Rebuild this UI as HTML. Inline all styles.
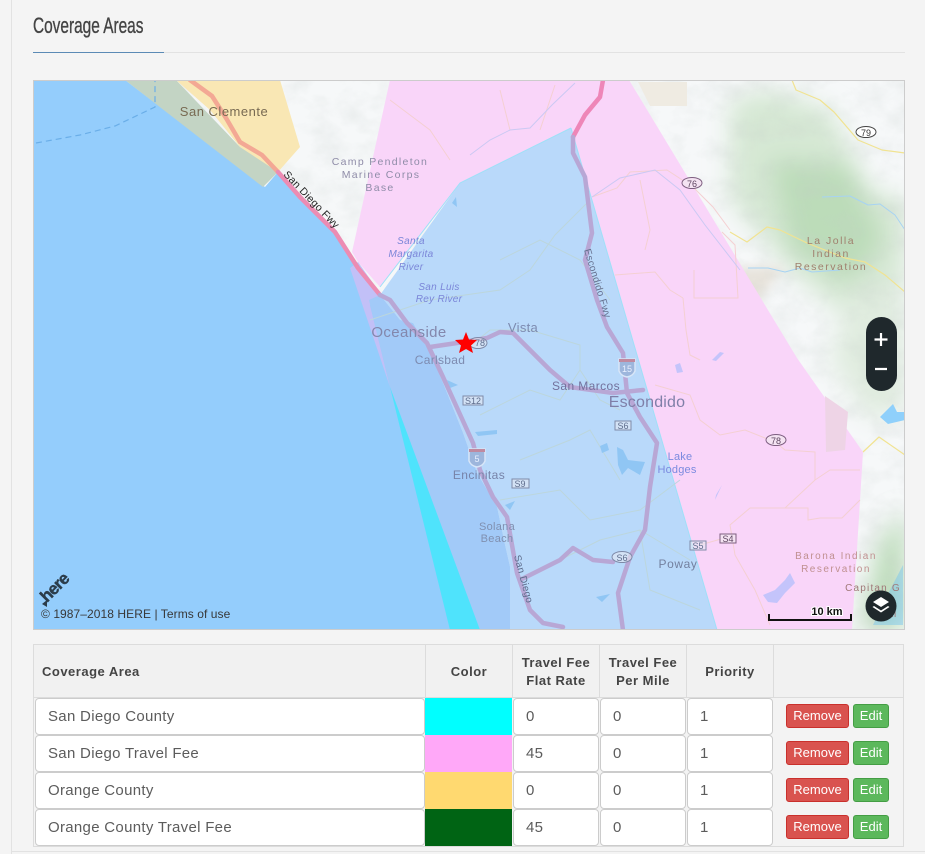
<!DOCTYPE html>
<html><head><meta charset="utf-8"><style>
html,body{margin:0;padding:0;width:925px;height:854px;overflow:hidden;background:#f4f4f4}
body{position:relative;font-family:"Liberation Sans",sans-serif;color:#555}
.a{position:absolute;box-sizing:border-box}
.h{background:#f1f1f1;border-right:1px solid #dcdcdc;font-weight:bold;font-size:13px;line-height:18px;color:#444;text-align:center;letter-spacing:.5px;display:flex;align-items:center;justify-content:center}
.i{background:#fff;border:1px solid #ccc;border-radius:4px;font-size:15px;line-height:36px;color:#5c5c5c;padding-left:12px;letter-spacing:.3px}
.b{height:24px;border-radius:3px;color:#fff;font-size:13px;line-height:22px;text-align:center;border:1px solid}
.r{background:#d9534f;border-color:#c9302c;left:786px;width:63px}
.e{background:#5cb85c;border-color:#449d44;left:853px;width:36px}
svg text{font-family:"Liberation Sans",sans-serif}
</style></head><body>
<div class="a" style="left:11px;top:0;width:1px;height:854px;background:#e2e2e2"></div>
<div class="a" style="left:12px;top:851px;width:913px;height:1px;background:#e2e2e2"></div>
<div class="a" id="t" style="left:33px;top:12px;font-size:22px;line-height:28px;color:#444;-webkit-text-stroke:.35px #444;transform:scaleX(.7);transform-origin:0 0;white-space:nowrap">Coverage Areas</div>
<div class="a" style="left:33px;top:52px;width:872px;height:1px;background:#e2e2e2"></div>
<div class="a" style="left:33px;top:52px;width:131px;height:1px;background:#5b8ab5"></div>

<svg class="a" style="left:33px;top:80px" width="872" height="550" viewBox="33 80 872 550">
<defs>
<filter id="bl" x="-20%" y="-20%" width="140%" height="140%"><feGaussianBlur stdDeviation="12"/></filter>
<filter id="bs" x="-20%" y="-20%" width="140%" height="140%"><feGaussianBlur stdDeviation="5"/></filter>
<filter id="nz" x="0" y="0" width="100%" height="100%"><feTurbulence type="fractalNoise" baseFrequency=".035 .05" numOctaves="4" seed="4"/><feColorMatrix values="0 0 0 0 .55  0 0 0 0 .6  0 0 0 0 .58  1.6 0 0 0 -.62"/></filter>
</defs>
<rect x="33" y="80" width="872" height="550" fill="#f6f8f9"/>
<!-- terrain -->
<g filter="url(#bl)">
<path d="M730 100L770 90L830 110L870 190L905 200V300L860 330L790 270L730 200Z" fill="#d6e8d4"/>
<path d="M770 160L850 165L885 240L850 285L790 250Z" fill="#bcdcb9"/>
<path d="M850 290L905 280V410L870 420L830 360Z" fill="#e0ecdf"/>
<path d="M880 540L905 510V630H860Z" fill="#bcdcb9"/>
</g>
<g filter="url(#bs)">
<path d="M715 270L785 265L760 300L725 305Z" fill="#e7e3db"/>
</g>
<rect x="33" y="80" width="872" height="550" filter="url(#nz)" opacity=".28"/>
<path d="M638 82H687V106H650Z" fill="#efebe2"/>
<!-- right side roads & rivers -->
<g fill="none" stroke-linejoin="round">
<path d="M792 80L796 90L820 100L834 112L858 140L882 150L905 153" stroke="#f1e391" stroke-width="1.2"/>
<path d="M730 232L747 242L767 227L780 230L807 243L845 258L865 262L885 275L905 292" stroke="#f1e391" stroke-width="1.2"/>
<path d="M822 197L850 196L868 205L880 204L895 215L905 230" stroke="#a7d3f3" stroke-width="1"/>
<path d="M748 268L768 268L785 272L800 268L812 272L840 270" stroke="#a7d3f3" stroke-width="1"/>
<path d="M863 452L879 437L905 455" stroke="#f1e391" stroke-width="1.2"/>
</g>
<path d="M880 417L893 404L897 412L905 412V420L888 424Z" fill="#8fd0fb"/>
<path d="M873 625L890 590L903 565V625Z" fill="#70c3f0" opacity=".45"/>
<!-- water -->
<path d="M33 80H125L265 187L278 172L300 197L335 235L358 268L380 295L400 320L413 323L430 353L443 383L463 433L477 473L497 507L505 545L510 567L510 630H33Z" fill="#94cdfc"/>
<!-- Orange polygons -->
<path d="M176 80H280L300 147L278 172L262 162L240 147L210 110Z" fill="#f9e7b4"/>
<path d="M125 80H176L240 147L278 172L263 187Z" fill="#c3d4c4"/>
<path d="M36 143L80 135L115 126L155 107V80" fill="none" stroke="#6aaee8" stroke-width="1.2" stroke-dasharray="6 4"/>
<!-- Pink -->
<path d="M390 80H629L797 358L863 452L852 630H717L571 128L460 183L380 287L358 262L352 252Z" fill="#f9d5f9"/>
<path d="M825 396L848 412L845 450L826 452Z" fill="#eed4e6"/>
<path d="M350 268L358 262L385 300L370 305L390 387Z" fill="#c2c0f7"/>
<!-- Blue -->
<path d="M571 128L717 630H510V567L505 545L497 507L477 473L463 433L443 383L430 353L413 323L400 320L380 295L460 183Z" fill="#b9d9fa"/>
<path d="M380 295L400 320L413 323L430 353L443 383L463 433L477 473L497 507L505 545L510 567V630H480L390 387L369 300Z" fill="#a2caf8"/>
<path d="M390 387L480 630H450Z" fill="#4fe3fc"/>
<path d="M571 128L717 630" fill="none" stroke="#9fe0f8" stroke-width="1"/>
<path d="M571 128L460 183L380 287" fill="none" stroke="#9fe0f8" stroke-width="1"/>
<!-- pink area minor roads -->
<g fill="none" stroke="#f4d0d2" stroke-width="1">
<path d="M592 197L617 188L630 172L667 170L693 187L713 207L730 230"/>
<path d="M640 180L650 230L645 250"/>
<path d="M694 270V298H738L735 245L722 232"/>
<path d="M683 298L686 330L690 355L700 360"/>
<path d="M615 275L655 272L670 290L683 298"/>
<path d="M655 385L690 395L700 420L720 435L745 430L775 442L785 450L815 452L815 480L830 470L860 470"/>
<path d="M815 480L785 508L750 508L730 525L735 555L755 590L770 625"/>
<path d="M785 508H808V520L820 518L842 518L860 500"/>
<path d="M700 545L735 535"/>
<path d="M390 100L430 130L450 160M500 90L510 130M555 85L540 130"/>
</g>
<g fill="none" stroke="#cbc9f3" stroke-width="1">
<path d="M575 83L552 105L530 128L510 130L490 140L470 155"/>
<path d="M592 197L620 178L655 170L680 190L705 225L740 270"/>
</g>
<g fill="none" stroke="#bcd6dc" stroke-width="1">
<path d="M370 320L430 300L500 290L530 270L555 235L590 200"/>
<path d="M480 415L530 390L560 400L580 370L600 400L620 410M580 370L580 345L530 330"/>
<path d="M520 460L570 440L590 430L620 480M500 500L560 490L590 520L640 510L680 480"/>
<path d="M560 560L600 540L640 530L690 560M640 530L650 590L700 610"/>
<path d="M610 300L580 260L540 240L500 260"/>
<path d="M465 350L490 330L530 330"/>
</g>
<g fill="#90c6f4">
<path d="M600 446L607 443L609 450L602 453Z"/>
<path d="M617 447L623 450L628 460L645 462L640 475L628 468L622 475L618 465Z"/>
<path d="M475 432L497 430V434L478 436Z"/>
<path d="M505 505L515 501L510 510Z"/>
<path d="M596 597L610 594L602 602Z"/>
<path d="M447 380L458 385L450 388Z"/>
<path d="M452 203L456 197L457 207Z"/>
</g>
<g fill="#c4c4fb">
<path d="M712 360L720 352L724 353L716 361Z"/>
<path d="M675 365L680 363L683 372L677 373Z"/>
<path d="M715 500L722 485L716 495Z" />
<path d="M763 595L775 590L785 580L790 573L795 583L785 593L777 603L768 602Z"/>
</g>
<!-- highways -->
<g fill="none" stroke-linecap="round" stroke-linejoin="round">
<path d="M190 80L212 96L226 118L240 142L262 155L278 172" stroke="#f3a894" stroke-width="4.5"/>
<path d="M278 172L300 197L335 232L358 268L380 295" stroke="#ec8cb3" stroke-width="4.500"/>
<path d="M603 80L600 97L585 115L573 137" stroke="#ee86b8" stroke-width="4.500"/>
<g stroke="#b8a7d5" stroke-width="4.500">
<path d="M380 295L390 300L407 323L427 343L443 377L473 443L480 470L493 497L507 517L517 573L530 610L543 623L563 627"/>
<path d="M573 137V153L585 177L592 233L585 260L597 300L607 327L623 353L627 393L640 417L657 443L650 487L645 530L630 557L618 593L623 630"/>
<path d="M430 347L457 343L487 338L500 332L513 333L530 350L550 370L570 387L613 393L643 390"/>
<path d="M520 580L560 560L573 548L593 560L613 562"/>
</g>
</g>
<!-- shields -->
<g font-size="10" text-anchor="middle">
<g fill="#e5e8f2" fill-opacity=".6" stroke="#7f8aa8" stroke-width="1">
<ellipse cx="478" cy="343" rx="9" ry="5.5"/>
<rect x="463" y="396" width="20" height="9"/>
<rect x="512" y="479" width="17" height="9"/>
<rect x="615" y="421" width="16" height="9"/>
<rect x="690" y="541" width="16" height="9"/>
<ellipse cx="622" cy="557" rx="10" ry="5.5"/>
</g>
<g fill="#f4e3f2" stroke="#7d5e80" stroke-width="1">
<ellipse cx="692" cy="183" rx="10" ry="5.5"/>
<ellipse cx="776" cy="440" rx="10" ry="5.5"/>
<rect x="720" y="534" width="16" height="9"/>
</g>
<ellipse cx="866" cy="132" rx="10" ry="5.5" fill="#fff" stroke="#444"/>
<path d="M469 449H485V461Q483 466 477 467Q471 466 469 461Z" fill="#9db6dc" stroke="#d8e6f8" stroke-width="1.500"/>
<path d="M469 449H485V452H469Z" fill="#c08aa0"/>
<path d="M619 359H635V371Q633 376 627 377Q621 376 619 371Z" fill="#9db6dc" stroke="#d8e6f8" stroke-width="1.500"/>
<path d="M619 359H635V362H619Z" fill="#c08aa0"/>
<g fill="#5f6d8c" font-size="9">
<text x="480" y="346">78</text><text x="473" y="404">S12</text><text x="520" y="487" >S9</text><text x="623" y="429">S6</text><text x="698" y="549">S5</text><text x="622" y="561">S6</text>
</g>
<g fill="#5d4560" font-size="9"><text x="692" y="187">76</text><text x="776" y="444">78</text><text x="728" y="542">S4</text></g>
<text x="866" y="136" fill="#333" font-size="9">79</text>
<text x="477" y="462" fill="#e8f0ff" font-size="9">5</text><text x="627" y="372" fill="#e8f0ff" font-size="9">15</text>
</g>
<!-- labels -->
<g text-anchor="middle">
<text x="224" y="116" font-size="13" fill="#786a52" letter-spacing=".5">San Clemente</text>
<g font-size="10.500" fill="#8f8ca8" letter-spacing="1.300"><text x="380" y="165">Camp Pendleton</text><text x="381" y="178">Marine Corps</text><text x="380" y="191">Base</text></g>
<g font-size="10" fill="#7b86d8" font-style="italic" letter-spacing=".3"><text x="411" y="244">Santa</text><text x="411" y="257">Margarita</text><text x="411" y="270">River</text><text x="439" y="290">San Luis</text><text x="439" y="302">Rey River</text></g>
<text x="409" y="337" font-size="15" fill="#8387ac" letter-spacing=".4">Oceanside</text>
<text x="523" y="332" font-size="13" fill="#7d8bb0" letter-spacing=".3">Vista</text>
<text x="440" y="364" font-size="12" fill="#7d8bb0" letter-spacing=".3">Carlsbad</text>
<text x="586" y="390" font-size="12" fill="#73719c" letter-spacing=".4">San Marcos</text>
<text x="647" y="407" font-size="16" fill="#7f7fa8" letter-spacing=".2">Escondido</text>
<text x="479" y="479" font-size="12" fill="#7783a8" letter-spacing=".4">Encinitas</text>
<g font-size="11" fill="#8090b0" letter-spacing=".3"><text x="497" y="530">Solana</text><text x="497" y="542">Beach</text></g>
<g font-size="11" fill="#7b8adf" letter-spacing=".2"><text x="680" y="460">Lake</text><text x="677" y="473">Hodges</text></g>
<text x="678" y="568" font-size="12" fill="#73809f" letter-spacing=".6">Poway</text>
<g font-size="10.500" fill="#a0806e" letter-spacing="1.500"><text x="831" y="244">La Jolla</text><text x="831" y="257">Indian</text><text x="831" y="270">Reservation</text></g>
<g font-size="10" fill="#c09090" letter-spacing="1.500"><text x="836" y="559">Barona Indian</text><text x="836" y="572">Reservation</text></g>
<text x="873" y="591" font-size="10" fill="#a07878" letter-spacing="1.200">Capitan G</text>
<text x="885" y="617" font-size="10" fill="#a07878" letter-spacing="1">Real</text>
<text transform="translate(283 175) rotate(46)" font-size="10.500" fill="#222" text-anchor="start" letter-spacing=".3">San Diego Fwy</text>
<text transform="translate(584 250) rotate(73)" font-size="10" fill="#66708f" text-anchor="start" letter-spacing=".3">Escondido Fwy</text>
<text transform="translate(514 556) rotate(75)" font-size="10" fill="#5d6c8c" text-anchor="start" letter-spacing=".3">San Diego</text>
</g>
<path d="M466 332L469 339.500L477 340L471 345.500L473 353L466 349L459 353L461 345.500L455 340L463 339.500Z" fill="#f00"/>
<!-- here logo -->
<text transform="translate(47 603) rotate(-45)" font-size="17" font-weight="bold" fill="#2b3c4a" stroke="#2b3c4a" stroke-width=".4" letter-spacing="-.8" text-anchor="start">here</text>
<path d="M42 604L47 600L47 607Z" fill="#2b3c4a"/>
<text x="41" y="618" font-size="12" fill="#383838" letter-spacing=".07">© 1987–2018 HERE | Terms of use</text>
<!-- zoom -->
<rect x="866" y="317" width="31" height="74" rx="15.500" fill="#1f282c"/>
<path d="M881 333V346M874.500 339.500H887.500M875 369H887" stroke="#fff" stroke-width="2.200" fill="none"/>
<!-- scale -->
<path d="M769 614V620H851V614" fill="none" stroke="#111" stroke-width="2"/>
<text x="827" y="615" font-size="11" font-weight="bold" fill="#111" text-anchor="middle" style="paint-order:stroke" stroke="#fff" stroke-width="2">10 km</text>
<circle cx="881" cy="606" r="15.500" fill="#1f282c"/>
<path d="M881 597L889 602L881 607L873 602Z" fill="#fff"/>
<path d="M874 606L881 610.500L888 606L889.500 607L881 612.500L872.500 607Z" fill="#fff"/>
<rect x="33.500" y="80.500" width="871" height="549" fill="none" stroke="#ccc"/>
</svg>

<!-- table -->
<div class="a" style="left:33px;top:644px;width:871px;height:203px;background:#f3f3f3;border:1px solid #dcdcdc"></div>
<div class="a h" style="left:34px;top:645px;width:392px;height:53px;justify-content:flex-start;padding-left:8px">Coverage Area</div>
<div class="a h" style="left:426px;top:645px;width:87px;height:53px">Color</div>
<div class="a h" style="left:513px;top:645px;width:87px;height:53px">Travel Fee<br>Flat Rate</div>
<div class="a h" style="left:600px;top:645px;width:87px;height:53px">Travel Fee<br>Per Mile</div>
<div class="a h" style="left:687px;top:645px;width:87px;height:53px">Priority</div>
<div class="a h" style="left:774px;top:645px;width:129px;height:53px;border-right:0"></div>
<div class="a" style="left:34px;top:697px;width:869px;height:1px;background:#dcdcdc"></div>

<div class="a i" style="left:35px;top:698px;width:390px;height:37px">San Diego County</div>
<div class="a" style="left:425px;top:698px;width:87px;height:37px;background:#0ff"></div>
<div class="a i" style="left:513px;top:698px;width:86px;height:37px">0</div>
<div class="a i" style="left:600px;top:698px;width:86px;height:37px">0</div>
<div class="a i" style="left:687px;top:698px;width:86px;height:37px">1</div>
<div class="a b r" style="top:704px">Remove</div><div class="a b e" style="top:704px">Edit</div>

<div class="a i" style="left:35px;top:735px;width:390px;height:37px">San Diego Travel Fee</div>
<div class="a" style="left:425px;top:735px;width:87px;height:37px;background:#ffa8f8"></div>
<div class="a i" style="left:513px;top:735px;width:86px;height:37px">45</div>
<div class="a i" style="left:600px;top:735px;width:86px;height:37px">0</div>
<div class="a i" style="left:687px;top:735px;width:86px;height:37px">1</div>
<div class="a b r" style="top:741px">Remove</div><div class="a b e" style="top:741px">Edit</div>

<div class="a i" style="left:35px;top:772px;width:390px;height:37px">Orange County</div>
<div class="a" style="left:425px;top:772px;width:87px;height:37px;background:#ffd970"></div>
<div class="a i" style="left:513px;top:772px;width:86px;height:37px">0</div>
<div class="a i" style="left:600px;top:772px;width:86px;height:37px">0</div>
<div class="a i" style="left:687px;top:772px;width:86px;height:37px">1</div>
<div class="a b r" style="top:778px">Remove</div><div class="a b e" style="top:778px">Edit</div>

<div class="a i" style="left:35px;top:809px;width:390px;height:37px">Orange County Travel Fee</div>
<div class="a" style="left:425px;top:809px;width:87px;height:37px;background:#006414"></div>
<div class="a i" style="left:513px;top:809px;width:86px;height:37px">45</div>
<div class="a i" style="left:600px;top:809px;width:86px;height:37px">0</div>
<div class="a i" style="left:687px;top:809px;width:86px;height:37px">1</div>
<div class="a b r" style="top:815px">Remove</div><div class="a b e" style="top:815px">Edit</div>
</body></html>
